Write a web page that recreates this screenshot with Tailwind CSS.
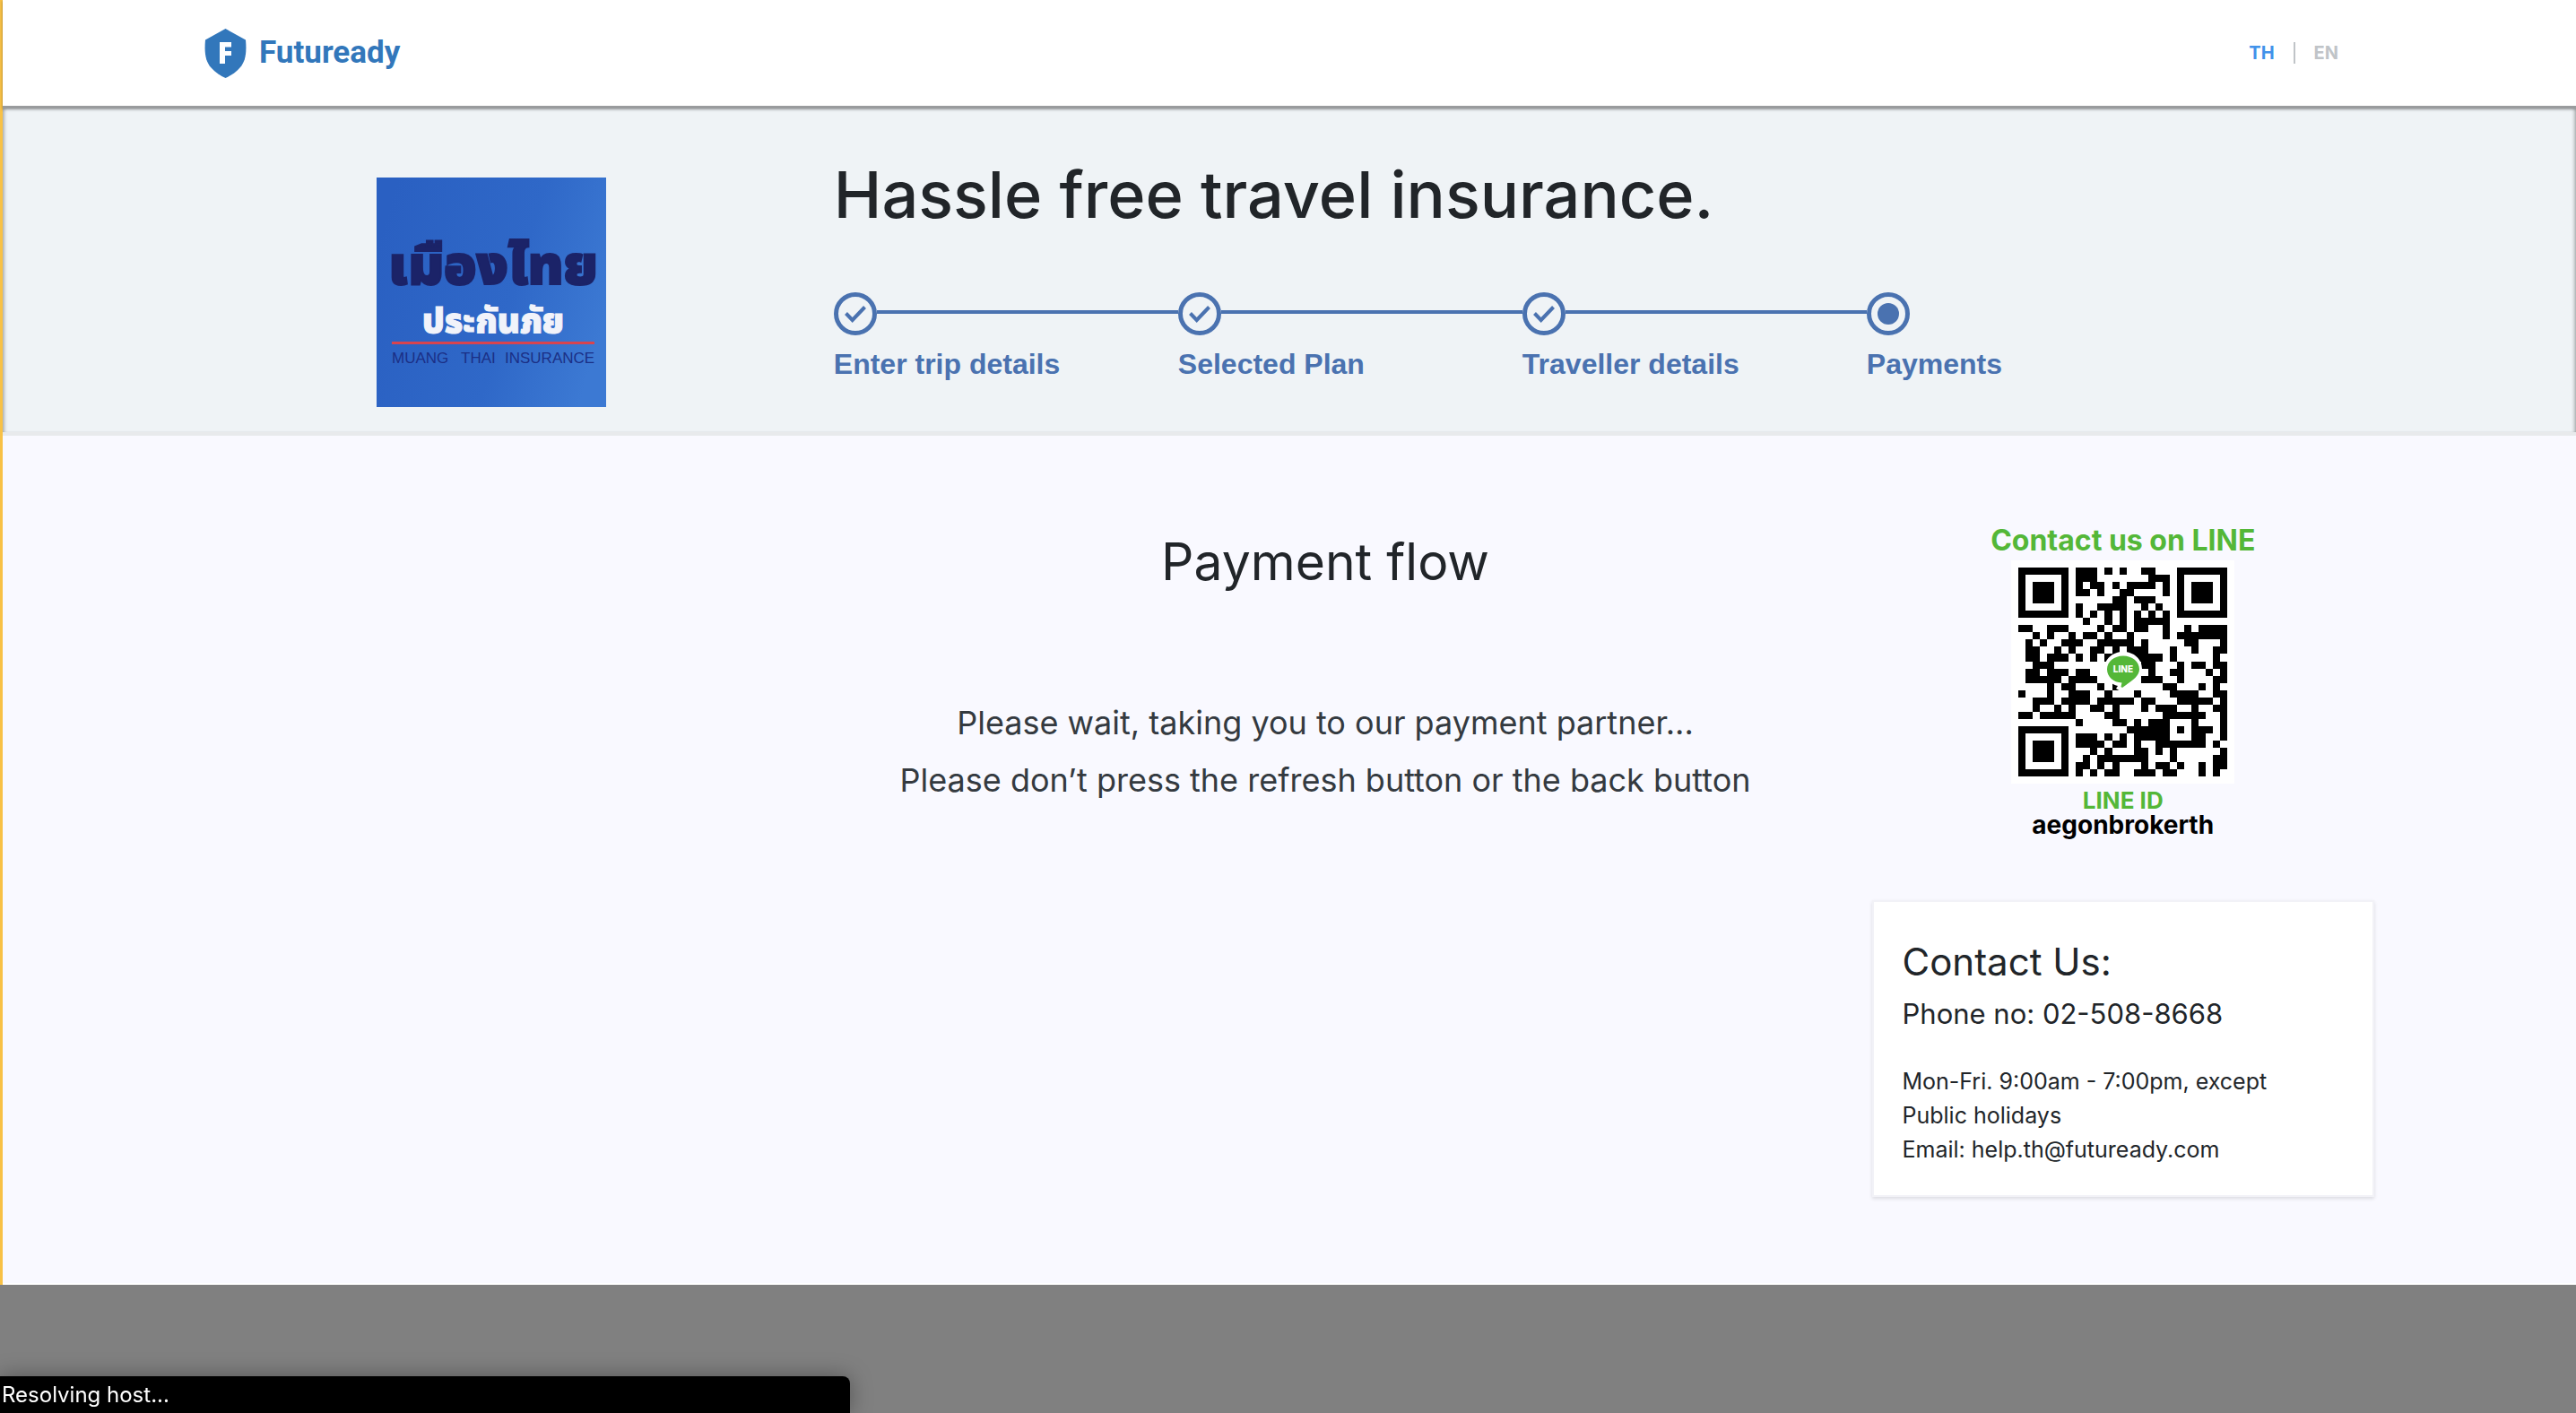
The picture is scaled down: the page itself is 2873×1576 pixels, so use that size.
<!DOCTYPE html>
<html lang="en">
<head>
<meta charset="utf-8">
<meta name="viewport" content="width=device-width, initial-scale=1">
<title>Futuready - Payment</title>
<script src="https://cdn.jsdelivr.net/npm/@tailwindcss/browser@4"></script>
</head>
<body class="min-h-screen bg-[#808080] font-['Inter','Noto_Sans',sans-serif] text-[#212529]">
<div class="border-l-3 border-[#f8c146]">
  <header class="relative border-b-3 border-[#999b9d] bg-white shadow-[0_1px_3px_rgba(0,0,0,0.35)]">
    <div class="mx-auto flex h-[118px] w-full max-w-[2420px] items-center justify-between">
      <a href="#" class="flex items-center gap-3.5 text-[#3277bb]" aria-label="Futuready home">
        <svg class="h-[55px] w-[47px]" viewBox="0 0 47 55" aria-hidden="true">
          <path fill="currentColor" d="M23.500 0 46 12.500C47.500 29 45 37 40 43 35 49 29 52.500 23.500 55 18 52.500 12 49 7 43 2 37 -.5 29 1 12.500Z"/>
          <path fill="#fff" d="M17 15H30V20.500H23V25H30V30H23V39H17Z"/>
        </svg>
        <span class="font-['Roboto',sans-serif] text-[35px] leading-[40px] font-bold">Futuready</span>
      </a>
      <nav class="flex items-center gap-[21px] pr-10 text-xl font-bold" aria-label="Language">
        <a href="#" class="text-[#4192ea]">TH</a>
        <span class="h-6 w-0.5 bg-[#c0c4c8]"></span>
        <a href="#" class="text-[#c0c4c8]">EN</a>
      </nav>
    </div>
  </header>

  <section class="border-b-4 border-[#e8eaec] bg-[#eff3f6] shadow-[inset_4px_0_4px_-3px_rgba(0,0,0,0.4),inset_-4px_0_4px_-3px_rgba(0,0,0,0.4)]">
    <div class="mx-auto grid w-full max-w-[2420px] grid-cols-[29fr_71fr]">
      <div class="pt-[77px] pb-7 pl-48">
        <svg class="size-64" viewBox="0 0 256 256" role="img" aria-label="Muang Thai Insurance">
          <defs>
            <linearGradient id="logoBlue" x1="0" y1="0.3" x2="1" y2="0.6">
              <stop offset="0" stop-color="#2a60c2"/>
              <stop offset="0.6" stop-color="#2f68c8"/>
              <stop offset="1" stop-color="#3c79d3"/>
            </linearGradient>
          </defs>
          <rect width="256" height="256" fill="url(#logoBlue)"/>
          <text x="130" y="119" text-anchor="middle" font-size="60" font-weight="900" fill="#1b2368" stroke="#1b2368" stroke-width="2" font-family="'Noto Sans Thai','Noto Sans',sans-serif">เมืองไทย</text>
          <text x="130" y="173" text-anchor="middle" font-size="38" font-weight="900" fill="#f1f3fa" stroke="#f1f3fa" stroke-width="1" font-family="'Noto Sans Thai','Noto Sans',sans-serif">ประกันภัย</text>
          <rect x="17" y="183" width="226" height="3" fill="#d8444f"/>
          <g font-size="17" fill="#1b2f85" font-family="'Liberation Sans',sans-serif">
            <text x="17" y="207">MUANG</text>
            <text x="94" y="207">THAI</text>
            <text x="143" y="207">INSURANCE</text>
          </g>
        </svg>
      </div>
      <div class="pt-12">
        <h1 class="text-[72px] leading-[96px] font-medium">Hassle free travel insurance.</h1>
        <ol class="mt-[61px] flex font-['Liberation_Sans',sans-serif] text-[32px] leading-[36px] font-bold text-[#4a72b0]">
          <li class="w-96">
            <div class="flex items-center">
              <svg class="size-12" viewBox="0 0 48 48" fill="none" stroke="currentColor" aria-hidden="true"><circle cx="24" cy="24" r="21.500" stroke-width="5"/><path d="M13.500 23.500 20.700 31 34.500 16.500" stroke-width="4"/></svg>
              <span class="mb-1 h-1 flex-1 bg-current"></span>
            </div>
            <p class="mt-3.5">Enter trip details</p>
          </li>
          <li class="w-96">
            <div class="flex items-center">
              <svg class="size-12" viewBox="0 0 48 48" fill="none" stroke="currentColor" aria-hidden="true"><circle cx="24" cy="24" r="21.500" stroke-width="5"/><path d="M13.500 23.500 20.700 31 34.500 16.500" stroke-width="4"/></svg>
              <span class="mb-1 h-1 flex-1 bg-current"></span>
            </div>
            <p class="mt-3.5">Selected Plan</p>
          </li>
          <li class="w-96">
            <div class="flex items-center">
              <svg class="size-12" viewBox="0 0 48 48" fill="none" stroke="currentColor" aria-hidden="true"><circle cx="24" cy="24" r="21.500" stroke-width="5"/><path d="M13.500 23.500 20.700 31 34.500 16.500" stroke-width="4"/></svg>
              <span class="mb-1 h-1 flex-1 bg-current"></span>
            </div>
            <p class="mt-3.5">Traveller details</p>
          </li>
          <li>
            <svg class="size-12" viewBox="0 0 48 48" fill="none" stroke="currentColor" aria-hidden="true"><circle cx="24" cy="24" r="21.500" stroke-width="5"/><circle cx="24" cy="24" r="12" fill="currentColor" stroke="none"/></svg>
            <p class="mt-3.5">Payments</p>
          </li>
        </ol>
      </div>
    </div>
  </section>

  <main class="border-b-2 border-white bg-[#f9f9ff] pb-24">
    <div class="mx-auto grid w-full max-w-[2420px] grid-cols-[64fr_109fr_56fr] gap-16">
      <section class="col-start-2 pt-[101px] text-center">
        <h2 class="text-[57px] leading-[80px]">Payment flow</h2>
        <div class="mt-[107px] text-[36px] leading-[64px] text-[#343a40]">
          <p>Please wait, taking you to our payment partner...</p>
          <p>Please don’t press the refresh button or the back button</p>
        </div>
      </section>
      <aside class="pt-[97px]">
        <div class="flex flex-col items-center font-bold">
          <p class="text-[32px] leading-10 text-[#54b738]">Contact us on LINE</p>
          <svg class="mt-0.5 size-[249px]" viewBox="0 0 249 249" role="img" aria-label="LINE QR code">
            <rect width="249" height="249" fill="#fff"/>
            <path id="qr" transform="translate(8 8) scale(8.040)" shape-rendering="crispEdges"/>
            <path d="M125 102C137 102 146 110 146 121 146 131 136 137 122 146L117 143 119 140C110 138 104 131 104 121 104 110 113 102 125 102Z" fill="#fff"/>
            <path d="M125 106.500C135 106.500 143 113 143 121.500 143 130 133 135 124 142L122.500 141 123.500 136.500C114 136 107 130 107 121.500 107 113 115 106.500 125 106.500Z" fill="#54b738"/>
            <text x="125" y="125" text-anchor="middle" font-size="10" font-weight="800" fill="#fff">LINE</text>
          </svg>
          <p class="mt-1.5 text-[26px] leading-[26px] text-[#54b738]">LINE ID</p>
          <p class="text-[28px] leading-7 text-black">aegonbrokerth</p>
        </div>
        <div class="mt-[70px] border-2 border-[#f2f2f7] bg-white px-8 pt-[39px] pb-8 shadow-[0_2px_4px_rgba(0,0,0,0.12)]">
          <h3 class="text-[42px] leading-[56px]">Contact Us:</h3>
          <p class="mt-1.5 text-[31px] leading-[48px]">Phone no: 02-508-8668</p>
          <div class="mt-8 text-[25px] leading-[38px]">
            <p>Mon-Fri. 9:00am - 7:00pm, except<br>Public holidays</p>
            <p>Email: help.th@futuready.com</p>
          </div>
        </div>
      </aside>
    </div>
  </main>
</div>
<div class="fixed bottom-0 left-0 w-[33%] rounded-tr-lg bg-black pl-0.5 text-[24px] leading-[41px] text-white shadow-[0_0_24px_rgba(0,0,0,0.35)]" role="status">Resolving host...</div>
<script>
  // Dark modules of the QR code, one "start-end" run list per row
  const rows = [
    "0-7 8-11 12-13 14-15 17-19 22-29",
    "0-1 6-7 8-11 18-21 22-23 28-29",
    "0-1 2-5 6-7 8-9 10-12 13-14 15-19 20-21 22-23 24-27 28-29",
    "0-1 2-5 6-7 8-10 11-12 14-16 20-21 22-23 24-27 28-29",
    "0-1 2-5 6-7 13-15 16-19 22-23 24-27 28-29",
    "0-1 6-7 8-9 11-15 17-18 19-20 22-23 28-29",
    "0-7 8-9 10-11 12-13 14-15 16-17 18-19 20-21 22-29",
    "9-10 12-13 14-15 16-21",
    "0-2 4-7 11-12 13-15 16-18 20-21 23-24 25-29",
    "2-3 4-5 7-8 9-11 12-13 15-16 20-21 22-29",
    "1-2 3-4 6-9 11-16 17-18 23-25 28-29",
    "1-3 5-6 7-8 10-12 13-14 15-18 21-22 24-25 27-29",
    "1-3 4-7 8-9 10-11 12-20 21-22 27-28",
    "2-5 17-19 22-23 24-26 27-29",
    "1-3 4-7 8-10 18-19 21-23 26-27 28-29",
    "1-6 7-11 17-20 22-23 27-29",
    "4-5 6-8 11-12 13-14 20-22 25-26 27-28",
    "0-1 4-5 7-10 12-13 16-17 21-25 27-29",
    "2-5 6-10 11-16 17-19 22-27 28-29",
    "2-3 5-6 7-8 10-12 13-14 17-18 19-22 24-25 27-29",
    "0-2 3-8 12-14 20-26 28-29",
    "8-9 13-15 16-17 18-21 24-25 28-29",
    "0-7 15-21 22-23 24-27 28-29",
    "0-1 6-7 8-11 12-13 14-15 16-21 24-26 28-29",
    "0-1 2-5 6-7 8-12 13-15 16-17 19-26 27-28",
    "0-1 2-5 6-7 10-11 12-13 16-18 19-20 21-22 28-29",
    "0-1 2-5 6-7 9-10 11-18 21-22 27-29",
    "0-1 6-7 8-10 11-12 13-14 17-18 19-21 22-23 25-26 27-29",
    "0-7 8-9 10-11 12-14 16-19 20-22 25-26 27-28"
  ];
  document.getElementById("qr").setAttribute("d", rows.map((row, y) =>
    row.split(" ").map(run => {
      const [a, b] = run.split("-").map(Number);
      return `M${a} ${y}h${b - a}v1h${a - b}z`;
    }).join("")).join(""));
</script>
</body>
</html>
